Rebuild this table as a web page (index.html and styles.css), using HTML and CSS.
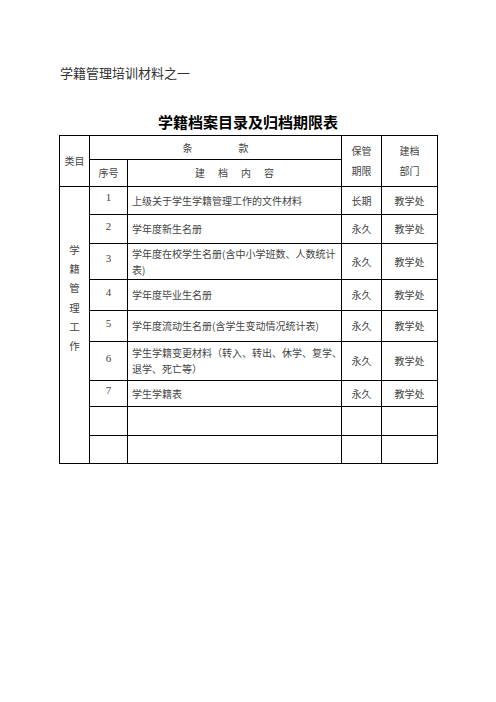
FILE: index.html
```html
<!DOCTYPE html>
<html lang="zh">
<head>
<meta charset="utf-8">
<title>学籍档案目录及归档期限表</title>
<link rel="stylesheet" href="styles.css">
</head>
<body>
<div class="page">
  <p class="doc-head">学籍管理培训材料之一</p>
  <h1 class="title">学籍档案目录及归档期限表</h1>
  <table class="archive">
    <colgroup>
      <col class="c-cat"><col class="c-no"><col class="c-item"><col class="c-term"><col class="c-dept">
    </colgroup>
    <tr class="h1">
      <td rowspan="2">类目</td>
      <td colspan="2"><div class="spread wide"><span>条</span><span>款</span></div></td>
      <td rowspan="2" class="stack">保管<br>期限</td>
      <td rowspan="2" class="stack">建档<br>部门</td>
    </tr>
    <tr class="h2">
      <td>序号</td>
      <td><div class="spread narrow"><span>建</span><span>档</span><span>内</span><span>容</span></div></td>
    </tr>
    <tr class="r1">
      <td rowspan="9" class="cat"><div class="vert">学<br>籍<br>管<br>理<br>工<br>作</div></td>
      <td class="no">1</td>
      <td class="item">上级关于学生学籍管理工作的文件材料</td>
      <td>长期</td>
      <td>教学处</td>
    </tr>
    <tr class="r2">
      <td class="no">2</td>
      <td class="item">学年度新生名册</td>
      <td>永久</td>
      <td>教学处</td>
    </tr>
    <tr class="r3">
      <td class="no">3</td>
      <td class="item">学年度在校学生名册(含中小学班数、人数统计<br>表)</td>
      <td>永久</td>
      <td>教学处</td>
    </tr>
    <tr class="r4">
      <td class="no">4</td>
      <td class="item">学年度毕业生名册</td>
      <td>永久</td>
      <td>教学处</td>
    </tr>
    <tr class="r5">
      <td class="no">5</td>
      <td class="item">学年度流动生名册(含学生变动情况统计表)</td>
      <td>永久</td>
      <td>教学处</td>
    </tr>
    <tr class="r6">
      <td class="no">6</td>
      <td class="item">学生学籍变更材料（转入、转出、休学、复学、<br>退学、死亡等）</td>
      <td>永久</td>
      <td>教学处</td>
    </tr>
    <tr class="r7">
      <td class="no">7</td>
      <td class="item">学生学籍表</td>
      <td>永久</td>
      <td>教学处</td>
    </tr>
    <tr class="r8">
      <td></td><td></td><td></td><td></td>
    </tr>
    <tr class="r9">
      <td></td><td></td><td></td><td></td>
    </tr>
  </table>
</div>
</body>
</html>
```

FILE: styles.css
```css
html, body {
  margin: 0;
  padding: 0;
  background: #ffffff;
}

body {
  font-family: "Noto Sans CJK SC", "Noto Sans CJK JP", sans-serif;
  color: #444;
}

.page {
  padding: 64px 0 0 59px;
  width: 378px;
}

.doc-head {
  margin: 0 0 30px 1px;
  font-size: 13px;
  line-height: 18px;
  color: #333;
}

.title {
  margin: 0 0 3px 0;
  font-size: 15px;
  line-height: 20px;
  font-weight: 700;
  color: #000;
  text-align: center;
}

.archive {
  border-collapse: collapse;
  table-layout: fixed;
  width: 378px;
  font-size: 10px;
  line-height: 16px;
}

.c-cat { width: 30px; }
.c-no { width: 38px; }
.c-item { width: 214px; }
.c-term { width: 40px; }
.c-dept { width: 56px; }

.archive td {
  border: 1px solid #000;
  padding: 0;
  text-align: center;
  vertical-align: middle;
}

.archive .item {
  text-align: left;
  padding-left: 4px;
  white-space: nowrap;
}

.archive .no {
  font-family: "Liberation Serif", "DejaVu Serif", serif;
  font-size: 11px;
  padding-bottom: 7px;
}

.stack {
  line-height: 20px;
  padding-bottom: 4px;
}

.spread {
  display: flex;
  justify-content: center;
}

.spread.wide { gap: 46px; }
.spread.narrow { gap: 13px; }

.h1 { height: 24px; }
.h2 { height: 27px; }
.r1 { height: 28px; }
.r2 { height: 29px; }
.r3 { height: 36px; }
.r4 { height: 31px; }
.r5 { height: 31px; }
.r6 { height: 39px; }
.r7 { height: 26px; }
.r8 { height: 29px; }
.r9 { height: 28px; }

.archive td.cat {
  vertical-align: top;
  padding-top: 53px;
}

.vert {
  line-height: 19.2px;
  font-size: 10.5px;
}
```
